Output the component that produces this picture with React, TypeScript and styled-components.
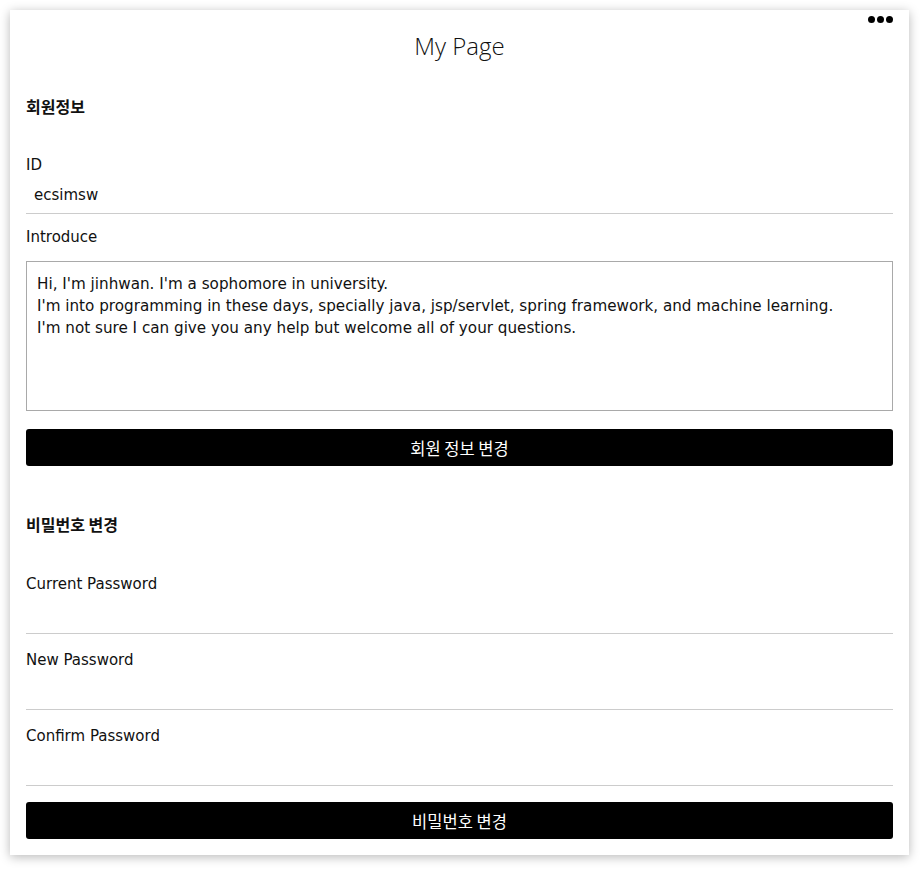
import React from "react";
import styled, { createGlobalStyle } from "styled-components";

const Global = createGlobalStyle`
  html, body { margin: 0; padding: 0; background: #ffffff; }
  body { font-family: "DejaVu Sans", "Noto Sans CJK KR", sans-serif; color: #111; }
  * { box-sizing: border-box; }
`;

const Card = styled.div`
  position: relative;
  margin: 10px 12px 16px 10px;
  width: 899px;
  background: #fff;
  box-shadow: 0 2px 10px rgba(0, 0, 0, 0.28);
  padding: 0 16px 16px;
  display: flex;
  flex-direction: column;
`;

const MoreButton = styled.div`
  position: absolute;
  top: 6px;
  right: 16px;
  display: flex;
  gap: 2px;
`;

const Dot = styled.span`
  width: 7px;
  height: 7px;
  border-radius: 50%;
  background: #000;
`;

const Title = styled.h1`
  margin: 0;
  padding-top: 22px;
  height: 85px;
  text-align: center;
  font-family: "Open Sans", "Noto Sans", sans-serif;
  font-weight: 300;
  font-size: 24px;
  line-height: 28px;
  color: #111;
`;

const SectionTitle = styled.h2`
  margin: 0;
  font-family: "Noto Sans CJK KR", sans-serif;
  font-weight: 700;
  font-size: 16px;
  line-height: 22px;
  color: #111;
`;

const Label = styled.div`
  font-size: 15px;
  line-height: 20px;
  color: #111;
  padding-top: 1px;
`;

const Field = styled.div<{ $gap: number }>`
  display: flex;
  flex-direction: column;
  margin-top: ${(p) => p.$gap}px;
`;

const Line = styled.div<{ $h: number }>`
  height: ${(p) => p.$h}px;
  border-bottom: 1px solid #cccccc;
  font-size: 15px;
  padding: 10px 0 0 8px;
  line-height: 20px;
`;

const TextArea = styled.div`
  margin-top: 14px;
  height: 150px;
  border: 1px solid #a9a9a9;
  padding: 11px 10px;
  font-size: 15.2px;
  line-height: 22px;
  color: #111;
`;

const Button = styled.div<{ $top: number }>`
  margin-top: ${(p) => p.$top}px;
  height: 37px;
  background: #000;
  border-radius: 3px;
  color: #fff;
  display: flex;
  align-items: center;
  justify-content: center;
  font-family: "Noto Sans CJK KR", sans-serif;
  font-size: 16.5px;
`;

export default function App() {
  return (
    <>
      <Global />
      <Card>
        <MoreButton>
          <Dot />
          <Dot />
          <Dot />
        </MoreButton>
        <Title>My Page</Title>
        <SectionTitle>회원정보</SectionTitle>
        <Field $gap={37}>
          <Label>ID</Label>
          <Line $h={39}>ecsimsw</Line>
        </Field>
        <Field $gap={12}>
          <Label>Introduce</Label>
          <TextArea>
            Hi, I'm jinhwan. I'm a sophomore in university.
            <br />
            I'm into programming in these days, specially java, jsp/servlet, spring framework, and machine learning.
            <br />
            I'm not sure I can give you any help but welcome all of your questions.
          </TextArea>
        </Field>
        <Button $top={18}>회원 정보 변경</Button>
        <Field $gap={47}>
          <SectionTitle>비밀번호 변경</SectionTitle>
        </Field>
        <Field $gap={38}>
          <Label>Current Password</Label>
          <Line $h={40} />
        </Field>
        <Field $gap={15}>
          <Label>New Password</Label>
          <Line $h={40} />
        </Field>
        <Field $gap={15}>
          <Label>Confirm Password</Label>
          <Line $h={40} />
        </Field>
        <Button $top={16}>비밀번호 변경</Button>
      </Card>
    </>
  );
}
